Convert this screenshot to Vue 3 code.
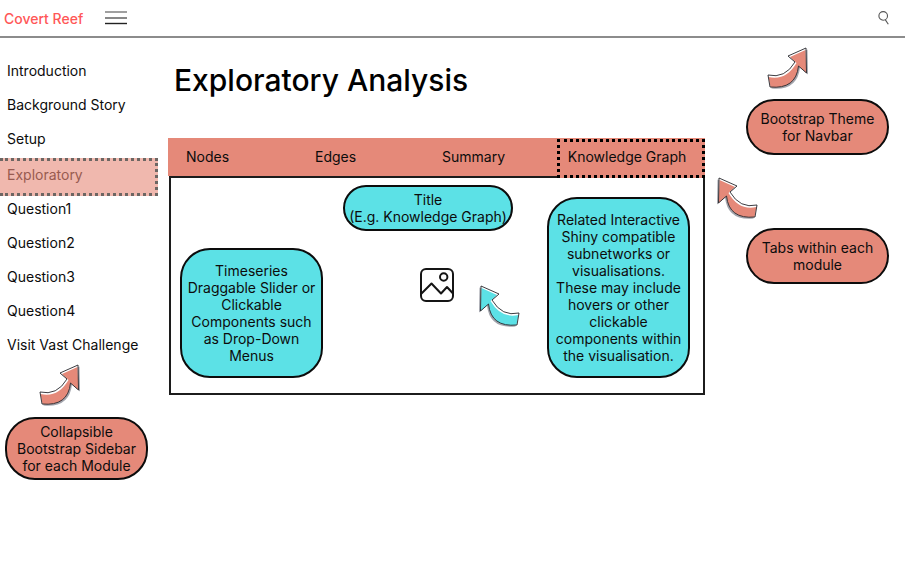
<script setup>
import { h, ref } from 'vue'

const links = [
  'Introduction', 'Background Story', 'Setup', 'Exploratory', 'Question1',
  'Question2', 'Question3', 'Question4', 'Visit Vast Challenge',
]
const tabs = ['Nodes', 'Edges', 'Summary', 'Knowledge Graph']
const activeLink = ref('Exploratory')
const activeTab = ref('Knowledge Graph')

const outline = 'M2 29 L4 41 Q30 43.500 32.500 20 L40.500 27 L40 2 L22 10 L29 16 Q19 33 2 29 Z'

const CurvedArrow = (props) =>
  h('svg', { width: 46, height: 46, viewBox: '0 0 46 46', 'aria-hidden': 'true' }, [
    h('path', { d: outline, fill: '#a3a5ad', transform: 'translate(1.500 1.500)' }),
    h('path', { d: outline, fill: '#fff' }),
    h('path', {
      d: 'M2.500 31 L4.500 41 Q30 43.500 32.500 20 L40.500 27 L39.500 4 L24 11 L30.500 17 Q20 35 2.500 31 Z',
      fill: props.fill,
    }),
    h('path', { d: outline, fill: 'none', stroke: '#26262b', 'stroke-width': 0.9 }),
  ])
CurvedArrow.props = ['fill']
</script>

<template>
  <div class="page">
    <header class="navbar">
      <a class="brand" href="#">Covert Reef</a>
      <button class="icon-button" type="button" aria-label="Toggle sidebar">
        <svg width="22" height="14" viewBox="0 0 22 14" fill="none" stroke-width="1.4">
          <path d="M0 1H22" stroke="#777" />
          <path d="M0 7H22" stroke="#555" />
          <path d="M0 12.5H22" stroke="#222" />
        </svg>
      </button>
      <button class="icon-button search" type="button" aria-label="Search">
        <svg width="12" height="14" viewBox="0 0 12 14" fill="none" stroke="#555" stroke-width="1.1">
          <circle cx="5.2" cy="4.9" r="4.3" />
          <path d="M7.2 8.6L10.3 13.2" />
        </svg>
      </button>
    </header>

    <div class="layout">
      <aside class="sidebar">
        <nav class="links">
          <a
            v-for="link in links"
            :key="link"
            href="#"
            class="link"
            :class="{ active: link === activeLink }"
            @click.prevent="activeLink = link"
          >{{ link }}</a>
        </nav>
        <CurvedArrow class="sidebar-arrow" fill="#e58979" />
        <p class="note coral">Collapsible<br>Bootstrap Sidebar<br>for each Module</p>
      </aside>

      <main class="content">
        <h1>Exploratory Analysis</h1>
        <div class="tabs" role="tablist">
          <button
            v-for="tab in tabs"
            :key="tab"
            type="button"
            role="tab"
            class="tab"
            :class="{ active: tab === activeTab }"
            :aria-selected="tab === activeTab"
            @click="activeTab = tab"
          >{{ tab }}</button>
        </div>
        <section class="panel">
          <p class="note cyan tall series">Timeseries<br>Draggable Slider or<br>Clickable<br>Components such<br>as Drop-Down<br>Menus</p>
          <div class="middle">
            <p class="note cyan title-note">Title<br>(E.g. Knowledge Graph)</p>
            <div class="figure">
              <svg class="picture" width="34" height="34" viewBox="0 0 34 34" fill="none" stroke="#151515" stroke-width="2" stroke-linejoin="round">
                <rect x="1" y="1" width="32" height="32" rx="5" />
                <circle cx="23.7" cy="9" r="3.7" />
                <path d="M1 26L11.500 15.500L21 25.500L27 19L33 25.500" />
              </svg>
              <CurvedArrow class="mirrored figure-arrow" fill="#5ce1e6" />
            </div>
          </div>
          <p class="note cyan tall related">Related Interactive<br>Shiny compatible<br>subnetworks or<br>visualisations.<br>These may include<br>hovers or other<br>clickable<br>components within<br>the visualisation.</p>
        </section>
      </main>

      <aside class="remarks">
        <CurvedArrow class="theme-arrow" fill="#e58979" />
        <p class="note coral">Bootstrap Theme<br>for Navbar</p>
        <CurvedArrow class="mirrored tabs-arrow" fill="#e58979" />
        <p class="note coral">Tabs within each<br>module</p>
      </aside>
    </div>
  </div>
</template>

<style>
body {
  background: #fff;
}
</style>

<style scoped>
.page {
  color: #0c0c0c;
  font: 14px/17px Inter, "Liberation Sans", sans-serif;
}
.page * {
  box-sizing: border-box;
}
.page svg {
  display: block;
}
.navbar {
  display: flex;
  align-items: center;
  height: 38px;
  padding: 0 15px 0 4px;
  border-bottom: 2px solid #8c8c8c;
}
.brand {
  color: #ff5757;
  font-weight: 500;
  text-decoration: none;
}
.icon-button {
  margin-left: 22px;
  padding: 0;
  border: 0;
  background: none;
}
.icon-button.search {
  margin-left: auto;
}
.layout {
  display: grid;
  grid-template-columns: 158px minmax(0, 1fr) 200px;
}
.links {
  display: flex;
  flex-direction: column;
  padding-top: 16px;
}
.link {
  height: 34px;
  padding-left: 7px;
  color: inherit;
  line-height: 34px;
  text-decoration: none;
}
.link.active {
  height: 38px;
  margin: 2px 0 -4px;
  border: 3px dotted #6c6663;
  border-left: 0;
  background: #f0b8ae;
  color: #985b50;
  line-height: 28px;
}
.sidebar-arrow {
  margin: 1px 0 0 38px;
}
.note {
  display: flow-root;
  width: 143px;
  margin: 0;
  padding: 9px 0;
  border: 2px solid #0c0c0c;
  border-radius: 30px;
  text-align: center;
  white-space: nowrap;
}
.sidebar .note {
  margin: 8px 0 0 5px;
  padding: 4px 0;
}
.coral {
  background: #e58979;
}
.cyan {
  background: #5ce1e6;
}
.tall {
  padding: 12px 0;
}
.content {
  padding-left: 10px;
}
h1 {
  margin: 22px 0 38px 6px;
  color: #000;
  font-size: 30px;
  font-weight: 500;
  line-height: 40px;
}
.tabs {
  display: grid;
  grid-template-columns: 129fr 127fr 133fr 148fr;
  height: 38px;
  background: #e58979;
}
.tab {
  height: 38px;
  padding: 0 0 2px 18px;
  border: 0;
  background: none;
  color: inherit;
  font: inherit;
  text-align: left;
}
.tab.active {
  height: 39px;
  margin-top: 1px;
  padding: 0 8px 5px 0;
  border: 3px dotted #000;
  background: #e58979;
  text-align: center;
}
.panel {
  display: grid;
  grid-template-columns: 143px minmax(0, 1fr) 143px;
  column-gap: 20px;
  margin-left: 1px;
  padding: 7px 13px 15px 9px;
  border: 2px solid #1c1c1c;
}
.series {
  align-self: end;
}
.panel .related {
  margin-top: 12px;
}
.middle {
  display: flex;
  flex-direction: column;
}
.middle .title-note {
  width: 170px;
  padding: 4px 0;
}
.figure {
  display: flex;
  gap: 21px;
  margin: 37px 0 0 77px;
}
.mirrored {
  transform: scaleX(-1);
}
.figure-arrow {
  margin-top: 16px;
}
.theme-arrow {
  margin: 8px 0 7px 61px;
}
.tabs-arrow {
  margin: 21px 0 6px 8px;
}
.remarks .note {
  margin-left: 41px;
}
</style>
